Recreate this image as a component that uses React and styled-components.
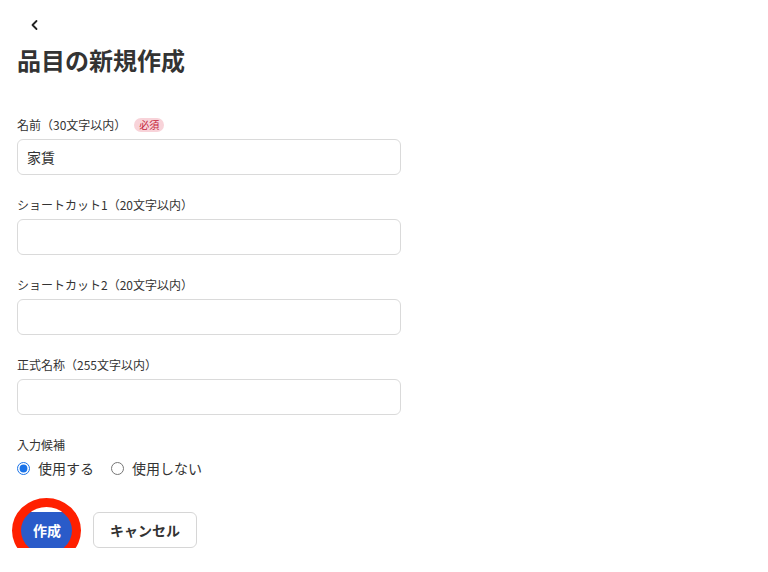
import React from "react";
import styled, { createGlobalStyle } from "styled-components";

const Global = createGlobalStyle`
  html, body { margin: 0; padding: 0; background: #fff; }
  body {
    font-family: "Noto Sans CJK JP", "Noto Sans", sans-serif;
    color: #333;
  }
  * { box-sizing: border-box; }
`;

const Page = styled.div`
  padding: 13px 17px 0 17px;
  width: 768px;
`;

const BackButton = styled.button`
  display: flex;
  align-items: center;
  justify-content: center;
  width: 24px;
  height: 24px;
  margin-left: 6px;
  padding: 0;
  border: none;
  background: none;
  color: #222;
  cursor: pointer;
`;

const Title = styled.h1`
  margin: 5px 0 0 0;
  font-size: 24px;
  line-height: 36px;
  font-weight: 700;
  color: #333;
`;

const Form = styled.form`
  display: flex;
  flex-direction: column;
  gap: 21px;
  margin-top: 38px;
  width: 384px;
`;

const Field = styled.div`
  display: flex;
  flex-direction: column;
  gap: 5px;
`;

const Label = styled.label`
  display: flex;
  align-items: center;
  gap: 8px;
  font-size: 12px;
  line-height: 18px;
  color: #333;
`;

const Badge = styled.span`
  display: inline-flex;
  align-items: center;
  height: 14px;
  padding: 0 5px;
  border-radius: 7px;
  background: #f8d3d9;
  color: #c4233b;
  font-size: 10px;
  line-height: 14px;
`;

const Input = styled.input`
  width: 100%;
  height: 36px;
  padding: 0 9px;
  border: 1px solid #dadada;
  border-radius: 6px;
  font-family: inherit;
  font-size: 14px;
  color: #333;
  outline: none;
`;

const RadioRow = styled.div`
  display: flex;
  align-items: center;
  gap: 17px;
  height: 18px;
`;

const RadioLabel = styled.label`
  display: flex;
  align-items: center;
  gap: 8px;
  font-size: 14px;
  color: #333;
`;

const Radio = styled.input`
  width: 13px;
  height: 13px;
  margin: 0;
  accent-color: #1a73e8;
`;

const Actions = styled.div`
  display: flex;
  gap: 16px;
  margin-top: 14px;
`;

const ButtonWrap = styled.div`
  position: relative;
`;

const PrimaryButton = styled.button`
  width: 60px;
  height: 36px;
  border: none;
  border-radius: 6px;
  background: #2a5bc9;
  color: #fff;
  font-family: inherit;
  font-size: 14px;
  font-weight: 700;
`;

const Ring = styled.div`
  position: absolute;
  left: -5px;
  top: -14px;
  width: 69px;
  height: 65px;
  border: 9px solid #ff2000;
  border-radius: 50%;
  pointer-events: none;
`;

const SecondaryButton = styled.button`
  width: 104px;
  height: 36px;
  border: 1px solid #d6d6d6;
  border-radius: 6px;
  background: #fff;
  color: #333;
  font-family: inherit;
  font-size: 14px;
  font-weight: 700;
`;

const fields = [
  { label: "名前（30文字以内）", required: true, value: "家賃" },
  { label: "ショートカット1（20文字以内）" },
  { label: "ショートカット2（20文字以内）" },
  { label: "正式名称（255文字以内）" },
];

export default function App() {
  return (
    <>
      <Global />
      <Page>
        <BackButton aria-label="戻る">
          <svg width="12" height="12" viewBox="0 0 12 12" fill="none">
            <path d="M7.5 2L3.5 6l4 4" stroke="#222" strokeWidth="1.8" strokeLinecap="round" strokeLinejoin="round" />
          </svg>
        </BackButton>
        <Title>品目の新規作成</Title>
        <Form onSubmit={(e) => e.preventDefault()}>
          {fields.map((f) => (
            <Field key={f.label}>
              <Label>
                {f.label}
                {f.required && <Badge>必須</Badge>}
              </Label>
              <Input defaultValue={f.value || ""} />
            </Field>
          ))}
          <Field>
            <Label>入力候補</Label>
            <RadioRow>
              <RadioLabel>
                <Radio type="radio" name="suggest" defaultChecked />
                使用する
              </RadioLabel>
              <RadioLabel>
                <Radio type="radio" name="suggest" />
                使用しない
              </RadioLabel>
            </RadioRow>
          </Field>
          <Actions>
            <ButtonWrap>
              <PrimaryButton type="submit">作成</PrimaryButton>
              <Ring />
            </ButtonWrap>
            <SecondaryButton type="button">キャンセル</SecondaryButton>
          </Actions>
        </Form>
      </Page>
    </>
  );
}
